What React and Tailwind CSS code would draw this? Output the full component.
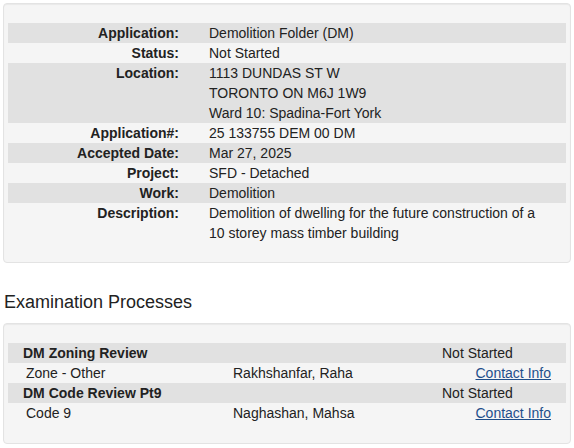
const details = [
  { label: "Application:", value: ["Demolition Folder (DM)"] },
  { label: "Status:", value: ["Not Started"] },
  { label: "Location:", value: ["1113 DUNDAS ST W", "TORONTO ON M6J 1W9", "Ward 10: Spadina-Fort York"] },
  { label: "Application#:", value: ["25 133755 DEM 00 DM"] },
  { label: "Accepted Date:", value: ["Mar 27, 2025"] },
  { label: "Project:", value: ["SFD - Detached"] },
  { label: "Work:", value: ["Demolition"] },
  {
    label: "Description:",
    value: ["Demolition of dwelling for the future construction of a 10 storey mass timber building"],
  },
];

const processes = [
  { name: "DM Zoning Review", status: "Not Started", task: "Zone - Other", examiner: "Rakhshanfar, Raha" },
  { name: "DM Code Review Pt9", status: "Not Started", task: "Code 9", examiner: "Naghashan, Mahsa" },
];

const App = () => {
  return (
    <div
      className="min-h-[448px] bg-white text-[14px] leading-[20px] text-[#222]"
      style={{ fontFamily: '"Liberation Sans", Arial, sans-serif' }}
    >
      <div className="pt-[3px] pl-[3px]">
        {/* Application details */}
        <div className="w-[568px] rounded-[4px] border border-[#e3e3e3] bg-[#f5f5f5] px-[4px] pt-[19px] pb-[19px] shadow-[inset_0_1px_1px_rgba(0,0,0,0.05)]">
          {details.map((row, i) => (
            <div key={row.label} className={`grid grid-cols-[176px_1fr] ${i % 2 === 0 ? "bg-[#e1e1e1]" : ""}`}>
              <div className="pr-[5px] text-right font-bold">{row.label}</div>
              <div className="pl-[25px] pr-[20px]">
                {row.value.map((v) => (
                  <div key={v}>{v}</div>
                ))}
              </div>
            </div>
          ))}
        </div>

        <h2 className="mt-[29px] mb-[11px] pl-[1px] text-[18px] leading-[20px] font-normal">Examination Processes</h2>

        {/* Examination processes */}
        <div className="w-[568px] rounded-[4px] border border-[#e3e3e3] bg-[#f5f5f5] px-[4px] pt-[19px] pb-[20px] shadow-[inset_0_1px_1px_rgba(0,0,0,0.05)]">
          {processes.map((p) => (
            <div key={p.name}>
              <div className="grid grid-cols-[210px_209px_1fr] bg-[#e1e1e1] pl-[15px] pr-[15px]">
                <div className="font-bold">{p.name}</div>
                <div></div>
                <div>{p.status}</div>
              </div>
              <div className="grid grid-cols-[210px_209px_1fr] pl-[15px] pr-[15px]">
                <div className="pl-[3px]">{p.task}</div>
                <div>{p.examiner}</div>
                <div className="text-right">
                  <a href="#" className="text-[#1f4f8b] underline">
                    Contact Info
                  </a>
                </div>
              </div>
            </div>
          ))}
        </div>
      </div>
    </div>
  );
};

export default App;
